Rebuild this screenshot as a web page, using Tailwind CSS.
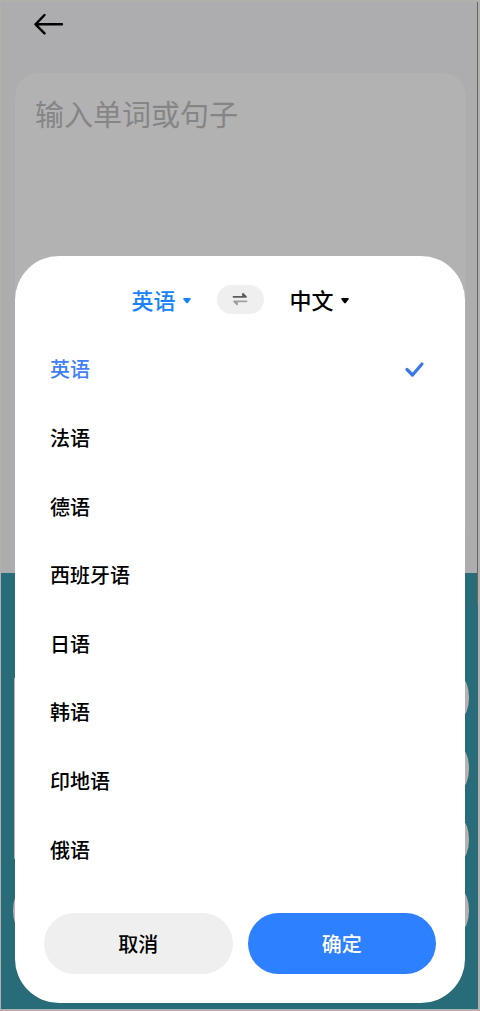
<!DOCTYPE html>
<html lang="zh-CN">
<head>
  <meta charset="UTF-8">
  <meta name="viewport" content="width=device-width, initial-scale=1.0">
  <title>翻译</title>
  <script src="https://cdn.jsdelivr.net/npm/@tailwindcss/browser@4"></script>
</head>
<body class="font-['Noto_Sans_CJK_SC',sans-serif] text-black">
  <div class="relative min-h-screen flex flex-col bg-[#adadaf] border-y-2 border-l border-r-2 border-[#b0b1ad]">
    <!-- Translate page -->
    <header class="h-[71px] px-[33px]">
      <button type="button" aria-label="返回" class="block mt-2">
        <svg width="30" height="28" viewBox="0 0 30 28" fill="none" stroke="#000" stroke-width="2.4" stroke-linecap="round" stroke-linejoin="round">
          <path d="M28 14.3H1.5M10.500 5L1.500 14.300l9 9"/>
        </svg>
      </button>
    </header>
    <main class="h-[500px] pl-[14px] pr-3">
      <textarea aria-label="输入单词或句子" placeholder="输入单词或句子" class="block w-full h-[480px] px-5 py-5 rounded-3xl bg-[#b2b2b2] text-[29px] leading-10 placeholder:text-[#858586] resize-none outline-none"></textarea>
    </main>
    <section class="flex-1 bg-[#286b79] pl-3 pr-[9px] pt-[105px]">
      <div class="flex flex-col gap-8">
        <div class="ml-px flex flex-col gap-8 border-l border-[#b5b3bd]">
          <div class="h-[39px] rounded-r-[8px_50%] bg-[#b5b3b2]"></div>
          <div class="h-[39px] rounded-r-[8px_50%] bg-[#b5b3b2]"></div>
          <div class="h-[39px] rounded-r-[8px_50%] bg-[#b5b3b2]"></div>
        </div>
        <div class="h-[39px] rounded-[8px/50%] bg-[#b5b3b2]"></div>
      </div>
    </section>
    <div class="absolute top-0 right-0 w-px h-[603px] bg-[#656563]"></div>

    <!-- Language sheet -->
    <div role="dialog" aria-label="选择语言" class="absolute top-[254px] bottom-[6px] left-[14px] right-[13px] flex flex-col bg-white rounded-[44px] pt-[27px] pb-[29px]">
      <div class="h-8 mb-5 flex items-center justify-center gap-[26px] text-[22px] leading-8 font-medium">
        <button type="button" class="flex items-center gap-[7px] text-[#1683fb]">
          英语
          <svg class="mt-1" width="8" height="6" viewBox="0 0 8 6" fill="currentColor"><path d="M1 0h6q1.200.3.500 1.400L4.800 5q-.8.900-1.600 0L.5 1.400Q-.2.300 1 0z"/></svg>
        </button>
        <button type="button" aria-label="交换语言" class="w-[47px] h-[29px] rounded-full bg-[#efeff0] flex items-center justify-center">
          <svg width="16" height="14" viewBox="0 0 16 14" fill="none" stroke-width="1.800" stroke-linecap="round" stroke-linejoin="round">
            <path stroke="#5c5c5c" fill="#5c5c5c" d="M1.500 4.800h12.500L11 1.800v3"/>
            <path stroke="#a0a0a0" fill="#a0a0a0" d="M14.500 9.300H2L5 12.300v-3"/>
          </svg>
        </button>
        <button type="button" class="flex items-center gap-[7px]">
          中文
          <svg class="mt-1" width="8" height="6" viewBox="0 0 8 6" fill="currentColor"><path d="M1 0h6q1.200.3.500 1.400L4.800 5q-.8.900-1.600 0L.5 1.400Q-.2.300 1 0z"/></svg>
        </button>
      </div>

      <div class="flex-1 grid auto-rows-fr text-[20px] leading-7 font-medium">
        <button type="button" class="px-[35px] flex items-center justify-between text-[#3f80f6]">
          英语
          <svg class="mr-[5px]" width="22" height="18" viewBox="0 0 22 18" fill="none" stroke="#3a78ea" stroke-width="3.200" stroke-linecap="round" stroke-linejoin="round">
            <path d="M4 9.500L9.500 15L19 4"/>
          </svg>
        </button>
        <button type="button" class="px-[35px] text-left">法语</button>
        <button type="button" class="px-[35px] text-left">德语</button>
        <button type="button" class="px-[35px] text-left">西班牙语</button>
        <button type="button" class="px-[35px] text-left">日语</button>
        <button type="button" class="px-[35px] text-left">韩语</button>
        <button type="button" class="px-[35px] text-left">印地语</button>
        <button type="button" class="px-[35px] text-left">俄语</button>
      </div>

      <div class="mt-[29px] px-[29px] grid grid-cols-2 gap-[15px] text-[20px] leading-7 font-medium">
        <button type="button" class="h-[61px] rounded-full bg-[#efeff0]">取消</button>
        <button type="button" class="h-[61px] rounded-full bg-[#2d80ff] text-white">确定</button>
      </div>
    </div>
  </div>
</body>
</html>
